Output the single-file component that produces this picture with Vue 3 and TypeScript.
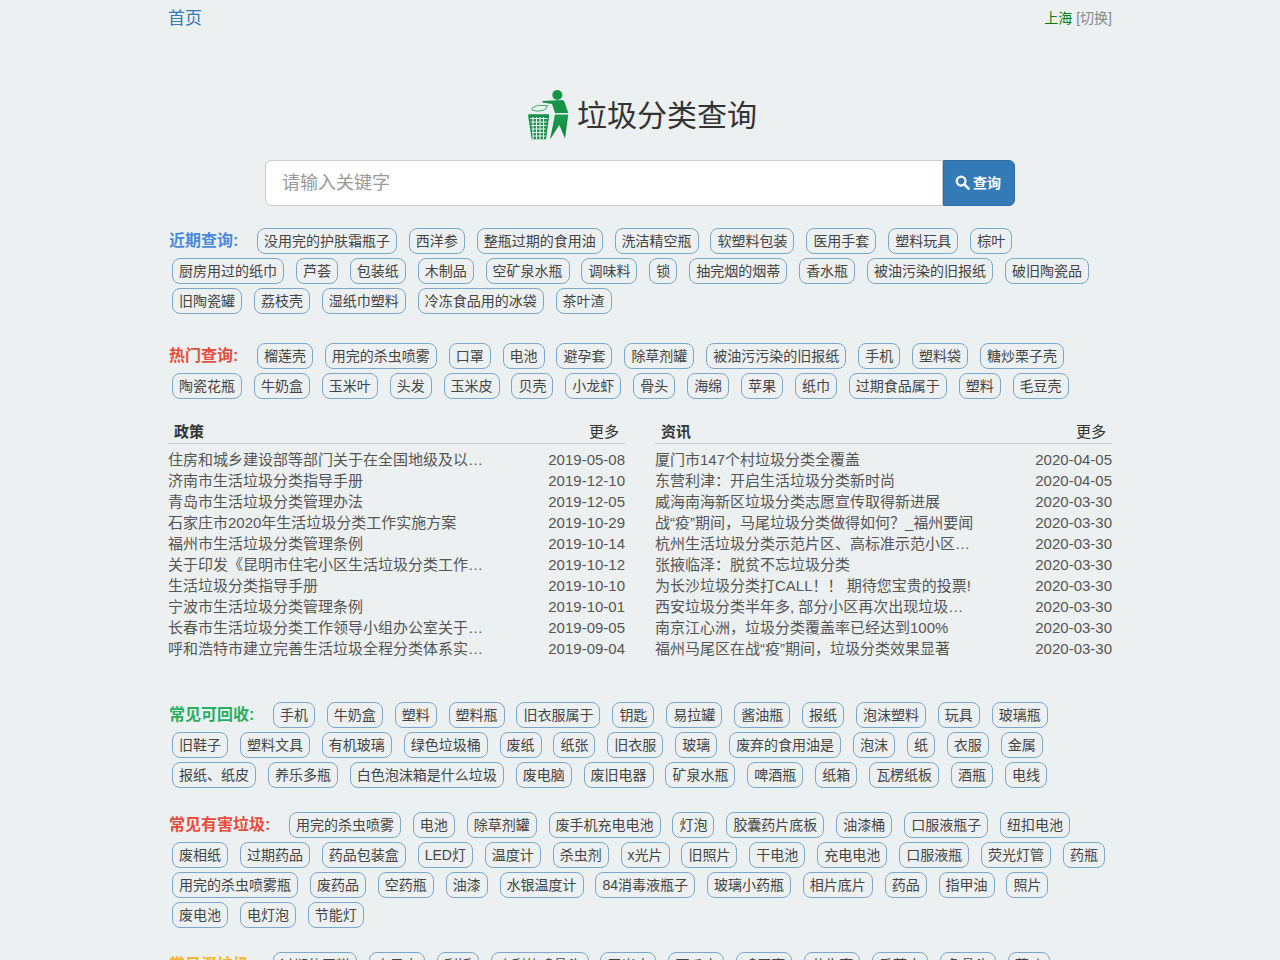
<template>
  <div class="page">
    <div class="topbar">
      <a class="home">首页</a>
      <span class="city"><em>上海</em> [切换]</span>
    </div>

    <h1 class="brand">
      <svg class="logo" viewBox="0 0 50 60" width="50" height="60">
        <defs>
          <linearGradient id="lg" x1="0" y1="0" x2="0" y2="1">
            <stop offset="0" stop-color="#1f9d4d" />
            <stop offset="1" stop-color="#0f8040" />
          </linearGradient>
        </defs>
        <circle cx="32.300" cy="10" r="5" fill="#159447" />
        <path d="M17.500 16 L37.500 15 Q39 15.500 39.500 17 L43.300 28 L30 28 L27 19 L17.500 17.500 Z" fill="#159447" />
        <path d="M30 29.500 L43.300 29.500 L40 53.500 L34.300 40 L25 54.500 Z" fill="url(#lg)" />
        <path d="M7 25 Q6 22.500 10 21.500 Q14 19.500 17 20.500 L22.500 20.500 Q22 24 18 25.500 Q12 27 7 25 Z" fill="none" stroke="#46a86e" stroke-width="1" />
        <path d="M3.300 29.300 H24 V32 L21 54.300 H6.700 L3.300 32 Z" fill="#17914a" />
        <path d="M5 33.500H22.500M5.500 37H22M6 40.500H21.500M6.500 44H21M7 47.500H20.500M7.500 51H20.500M8 32V54M11.500 32V54M15 32V54M18.500 32V54" stroke="#eaeff0" stroke-width="1.100" fill="none" />
      </svg>
      <span class="brand-text">垃圾分类查询</span>
    </h1>

    <div class="search">
      <input class="search-input" placeholder="请输入关键字" />
      <button class="search-btn">
        <svg viewBox="0 0 16 16" width="15" height="15">
          <circle cx="6.500" cy="6.500" r="4.700" fill="none" stroke="#fff" stroke-width="2.400" />
          <path d="M10 10 L14.500 14.500" stroke="#fff" stroke-width="2.800" stroke-linecap="round" />
        </svg>
        <span>查询</span>
      </button>
    </div>

    <section v-for="g in topGroups" :key="g.title" class="tag-group top">
      <strong class="group-title" :class="g.color">{{ g.title }}:</strong>
      <a v-for="(t, i) in g.tags" :key="i" class="tag">{{ t }}</a>
    </section>

    <div class="news">
      <div v-for="col in news" :key="col.title" class="news-col">
        <div class="news-head">
          <strong>{{ col.title }}</strong>
          <a>更多</a>
        </div>
        <ul>
          <li v-for="(row, i) in col.rows" :key="i">
            <span class="news-title">{{ row[0] }}</span>
            <span class="news-date">{{ row[1] }}</span>
          </li>
        </ul>
      </div>
    </div>

    <section v-for="g in bottomGroups" :key="g.title" class="tag-group bottom">
      <strong class="group-title" :class="g.color">{{ g.title }}:</strong>
      <a v-for="(t, i) in g.tags" :key="i" class="tag">{{ t }}</a>
    </section>
  </div>
</template>

<script setup lang="ts">
  const topGroups = [
    {
      title: '近期查询',
      color: 'blue',
      tags: ['没用完的护肤霜瓶子', '西洋参', '整瓶过期的食用油', '洗洁精空瓶', '软塑料包装', '医用手套', '塑料玩具', '棕叶', '厨房用过的纸巾', '芦荟', '包装纸', '木制品', '空矿泉水瓶', '调味料', '锁', '抽完烟的烟蒂', '香水瓶', '被油污染的旧报纸', '破旧陶瓷品', '旧陶瓷罐', '荔枝壳', '湿纸巾塑料', '冷冻食品用的冰袋', '茶叶渣'],
    },
    {
      title: '热门查询',
      color: 'red',
      tags: ['榴莲壳', '用完的杀虫喷雾', '口罩', '电池', '避孕套', '除草剂罐', '被油污污染的旧报纸', '手机', '塑料袋', '糖炒栗子壳', '陶瓷花瓶', '牛奶盒', '玉米叶', '头发', '玉米皮', '贝壳', '小龙虾', '骨头', '海绵', '苹果', '纸巾', '过期食品属于', '塑料', '毛豆壳'],
    },
  ]

  const bottomGroups = [
    {
      title: '常见可回收',
      color: 'green',
      tags: ['手机', '牛奶盒', '塑料', '塑料瓶', '旧衣服属于', '钥匙', '易拉罐', '酱油瓶', '报纸', '泡沫塑料', '玩具', '玻璃瓶', '旧鞋子', '塑料文具', '有机玻璃', '绿色垃圾桶', '废纸', '纸张', '旧衣服', '玻璃', '废弃的食用油是', '泡沫', '纸', '衣服', '金属', '报纸、纸皮', '养乐多瓶', '白色泡沫箱是什么垃圾', '废电脑', '废旧电器', '矿泉水瓶', '啤酒瓶', '纸箱', '瓦楞纸板', '酒瓶', '电线'],
    },
    {
      title: '常见有害垃圾',
      color: 'red',
      tags: ['用完的杀虫喷雾', '电池', '除草剂罐', '废手机充电电池', '灯泡', '胶囊药片底板', '油漆桶', '口服液瓶子', '纽扣电池', '废相纸', '过期药品', '药品包装盒', 'LED灯', '温度计', '杀虫剂', 'x光片', '旧照片', '干电池', '充电电池', '口服液瓶', '荧光灯管', '药瓶', '用完的杀虫喷雾瓶', '废药品', '空药瓶', '油漆', '水银温度计', '84消毒液瓶子', '玻璃小药瓶', '相片底片', '药品', '指甲油', '照片', '废电池', '电灯泡', '节能灯'],
    },
    {
      title: '常见湿垃圾',
      color: 'yellow',
      tags: ['过期的蛋糕', '水果皮', '剩饭', '吃剩的鸡骨头', '玉米皮', '西瓜皮', '鸡蛋壳', '花生壳', '香蕉皮', '鱼骨头', '菜叶'],
    },
  ]

  const news = [
    {
      title: '政策',
      rows: [
        ['住房和城乡建设部等部门关于在全国地级及以上城市全面开展生活垃圾分类', '2019-05-08'],
        ['济南市生活垃圾分类指导手册', '2019-12-10'],
        ['青岛市生活垃圾分类管理办法', '2019-12-05'],
        ['石家庄市2020年生活垃圾分类工作实施方案', '2019-10-29'],
        ['福州市生活垃圾分类管理条例', '2019-10-14'],
        ['关于印发《昆明市住宅小区生活垃圾分类工作实施方案》的通知', '2019-10-12'],
        ['生活垃圾分类指导手册', '2019-10-10'],
        ['宁波市生活垃圾分类管理条例', '2019-10-01'],
        ['长春市生活垃圾分类工作领导小组办公室关于印发通知', '2019-09-05'],
        ['呼和浩特市建立完善生活垃圾全程分类体系实施方案', '2019-09-04'],
      ],
    },
    {
      title: '资讯',
      rows: [
        ['厦门市147个村垃圾分类全覆盖', '2020-04-05'],
        ['东营利津\uFF1A开启生活垃圾分类新时尚', '2020-04-05'],
        ['威海南海新区垃圾分类志愿宣传取得新进展', '2020-03-30'],
        ['战“疫”期间\uFF0C马尾垃圾分类做得如何\uFF1F_福州要闻', '2020-03-30'],
        ['杭州生活垃圾分类示范片区、高标准示范小区名单公布', '2020-03-30'],
        ['张掖临泽\uFF1A脱贫不忘垃圾分类', '2020-03-30'],
        ['为长沙垃圾分类打CALL\uFF01\uFF01 期待您宝贵的投票!', '2020-03-30'],
        ['西安垃圾分类半年多, 部分小区再次出现垃圾混投现象', '2020-03-30'],
        ['南京江心洲\uFF0C垃圾分类覆盖率已经达到100%', '2020-03-30'],
        ['福州马尾区在战“疫”期间\uFF0C垃圾分类效果显著', '2020-03-30'],
      ],
    },
  ]
</script>

<style>
  html,
  body {
    background: #ecf0f1;
    height: 960px;
    overflow: hidden;
  }
</style>

<style scoped>
  .page {
    width: 944px;
    margin: 0 auto;
    font-family: 'Liberation Sans', 'Noto Sans CJK SC', sans-serif;
    font-size: 14px;
    color: #333;
  }

  .topbar {
    display: flex;
    justify-content: space-between;
    height: 36px;
    padding-top: 7px;
    box-sizing: border-box;
  }

  .home {
    font-size: 17px;
    line-height: 24px;
    color: #337ab7;
  }

  .city {
    line-height: 22px;
    color: #888;
  }

  .city em {
    font-style: normal;
    color: #008000;
  }

  .brand {
    display: flex;
    align-items: center;
    height: 60px;
    margin: 49px 0 15px;
    padding-left: 357px;
    gap: 2px;
    font-size: 30px;
    font-weight: 400;
    color: #333;
  }

  .brand-text {
    padding-bottom: 4px;
  }

  .search {
    display: flex;
    width: 750px;
    height: 46px;
    margin: 0 auto 22px;
  }

  .search-input {
    flex: 1;
    min-width: 0;
    box-sizing: border-box;
    height: 46px;
    padding: 0 16px;
    border: 1px solid #ccc;
    border-radius: 6px 0 0 6px;
    background: #fff;
    font: inherit;
    font-size: 18px;
    outline: none;
  }

  .search-input::placeholder {
    color: #999;
  }

  .search-btn {
    display: flex;
    align-items: center;
    justify-content: center;
    gap: 3px;
    width: 72px;
    height: 46px;
    padding: 0 2px 2px 0;
    border: 1px solid #2e6da4;
    border-radius: 0 6px 6px 0;
    background: #337ab7;
    color: #fff;
    font: inherit;
    font-weight: 700;
  }

  .tag-group {
    display: flex;
    flex-wrap: wrap;
    align-items: center;
    gap: 4px 11.900px;
    padding-left: 4px;
    margin-bottom: 20px;
  }

  .top + .top {
    margin-top: 29px;
  }

  .bottom + .bottom {
    margin-top: 24px;
  }

  .group-title {
    margin-left: -3px;
    margin-right: 6.700px;
    line-height: 20px;
    font-size: 16px;
    font-weight: 700;
  }

  .blue { color: #4a89dc; }
  .red { color: #e74c3c; }
  .green { color: #27ae60; }
  .yellow { color: #f1b52e; }

  .tag {
    box-sizing: border-box;
    height: 26px;
    line-height: 24px;
    padding: 0 6px;
    border: 1px solid #7ba7cc;
    border-radius: 8px;
    color: #444;
    white-space: nowrap;
  }

  .news {
    display: flex;
    justify-content: space-between;
    margin-bottom: 43px;
    font-size: 15px;
  }

  .news-col {
    width: 457px;
  }

  .news-head {
    display: flex;
    justify-content: space-between;
    height: 25px;
    line-height: 26px;
    padding: 0 6px;
    border-bottom: 1px solid #ccc;
    box-sizing: border-box;
  }

  .news-head a {
    font-weight: 400;
    color: #333;
  }

  .news ul {
    list-style: none;
    margin: 5px 0 0;
    padding: 0;
  }

  li {
    display: flex;
    justify-content: space-between;
    height: 21px;
    line-height: 21px;
    color: #555;
  }

  .news-title {
    width: 320px;
    overflow: hidden;
    white-space: nowrap;
    text-overflow: ellipsis;
  }
</style>
